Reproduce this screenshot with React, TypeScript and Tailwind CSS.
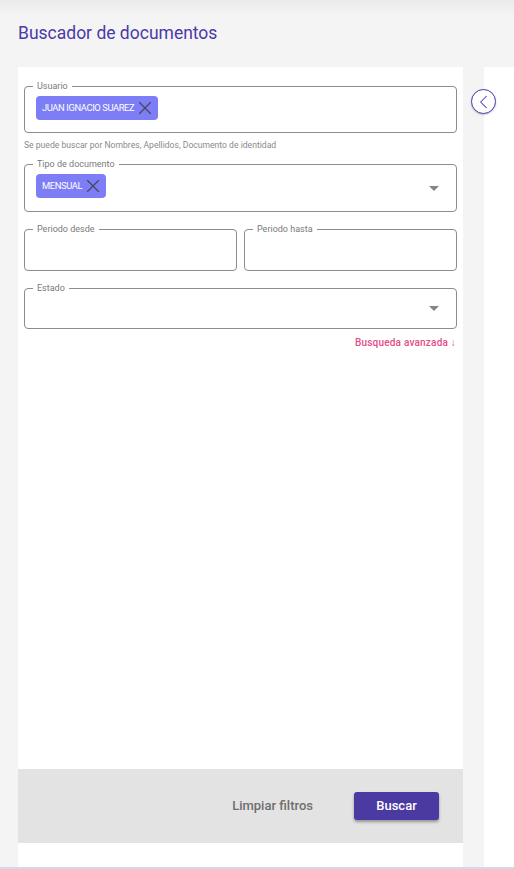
import { ChevronLeft, X } from "lucide-react";

function Chip({ text }: { text: string }) {
  return (
    <div className="flex h-[24px] items-center gap-0 rounded-[4px] bg-[#7d7df6] pl-[6px] pr-[2px]">
      <span className="text-[9.4px] tracking-[-0.4px] text-white">{text}</span>
      <X size={22} strokeWidth={1.25} className="text-[#44445a]" />
    </div>
  );
}

function Field({
  label,
  className,
  children,
  select,
}: {
  label: string;
  className: string;
  children?: React.ReactNode;
  select?: boolean;
}) {
  return (
    <div
      className={`relative flex items-start rounded-[4px] border border-[#8c8c8c] pl-[11px] pr-[17px] ${className}`}
    >
      <span className="absolute left-[8px] top-[-7px] bg-white px-[4px] text-[9px] leading-[12px] text-[#7a7a7a]">
        {label}
      </span>
      <div className="flex-1 pt-[9px]">{children}</div>
      {select && (
        <div className="self-center h-0 w-0 border-x-[5px] border-t-[5px] border-x-transparent border-t-[#858585]" />
      )}
    </div>
  );
}

export default function App() {
  return (
    <div
      className="relative flex h-[869px] w-[514px] flex-col overflow-hidden bg-[#f4f4f4]"
      style={{ fontFamily: "Roboto, 'Liberation Sans', sans-serif" }}
    >
      <div className="h-[16px] bg-gradient-to-b from-[#ebebeb] to-[#f4f4f4]" />
      <h1 className="px-[18px] pt-[5px] text-[17.5px] leading-[24px] text-[#4b3aa8]">
        Buscador de documentos
      </h1>
      <div className="ml-[18px] mt-[22px] flex flex-1 gap-[21px]">
        <div className="flex w-[445px] shrink-0 flex-col bg-white">
          <div className="flex flex-1 flex-col px-[6px] pt-[19px]">
            <Field label="Usuario" className="h-[47px]">
              <div className="flex">
                <Chip text="JUAN IGNACIO SUAREZ" />
              </div>
            </Field>
            <p className="mt-[6px] text-[8.6px] leading-[12px] text-[#8a8a8a]">
              Se puede buscar por Nombres, Apellidos, Documento de identidad
            </p>
            <Field label="Tipo de documento" className="mt-[13px] h-[48px]" select>
              <div className="flex">
                <Chip text="MENSUAL" />
              </div>
            </Field>
            <div className="mt-[17px] flex gap-[7px]">
              <Field label="Periodo desde" className="h-[42px] w-[213px]" />
              <Field label="Periodo hasta" className="h-[42px] flex-1" />
            </div>
            <Field label="Estado" className="mt-[17px] h-[41px]" select />
            <div className="mt-[7px] flex justify-end pr-[1px]">
              <span className="text-[10px] font-medium leading-[14px] tracking-[0.2px] text-[#e44d86]">
                Busqueda avanzada ↓
              </span>
            </div>
          </div>
          <div className="flex h-[74px] items-center justify-end gap-[41px] bg-[#e3e3e3] pr-[24px]">
            <button className="text-[13px] font-medium text-[#6e6e6e]">Limpiar filtros</button>
            <button className="h-[28px] w-[85px] rounded-[3px] bg-[#4b3aa2] text-[13px] font-medium text-white shadow-[0_2px_3px_rgba(0,0,0,0.35)]">
              Buscar
            </button>
          </div>
          <div className="h-[24px]" />
        </div>
        <div className="flex-1 bg-white" />
      </div>
      <div className="h-[2px] bg-[#d4d8ee]" />
      <button className="absolute left-[471px] top-[89px] flex h-[25px] w-[25px] items-center justify-center rounded-full border border-[#4b3aa8] bg-white shadow-[0_1px_2px_rgba(0,0,0,0.2)]">
        <ChevronLeft size={24} strokeWidth={1.1} className="text-[#4b3aa8]" />
      </button>
    </div>
  );
}
